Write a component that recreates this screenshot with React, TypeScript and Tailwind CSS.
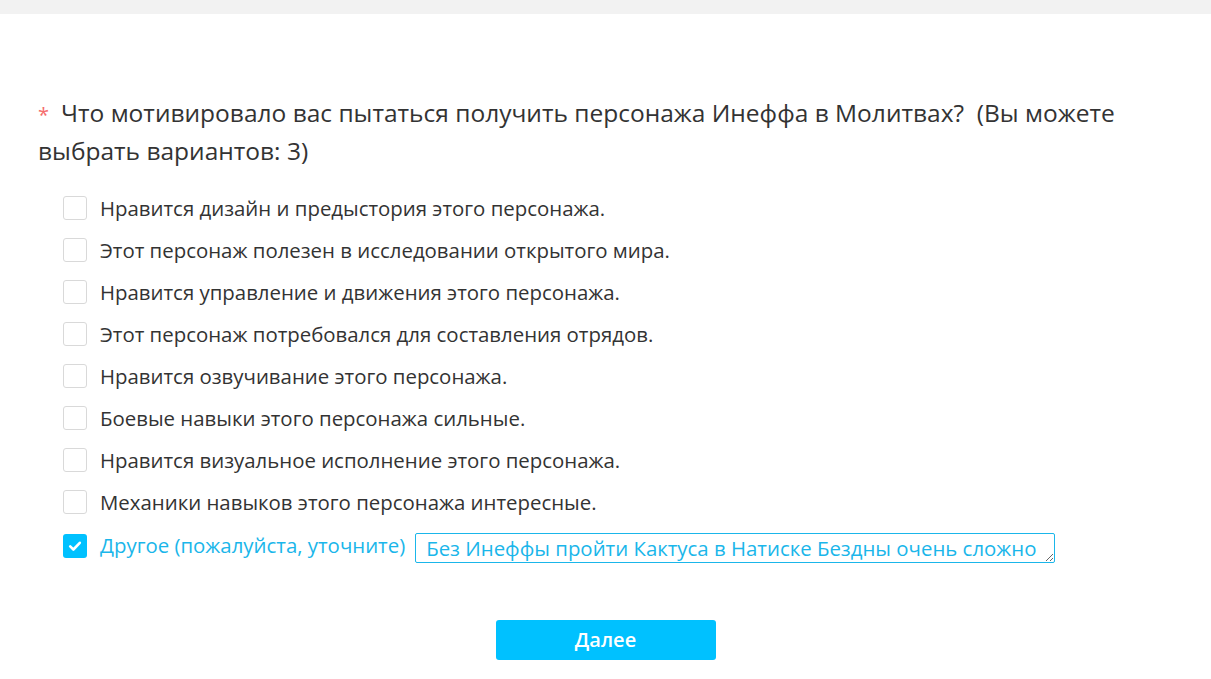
import React from "react";

const options = [
  "Нравится дизайн и предыстория этого персонажа.",
  "Этот персонаж полезен в исследовании открытого мира.",
  "Нравится управление и движения этого персонажа.",
  "Этот персонаж потребовался для составления отрядов.",
  "Нравится озвучивание этого персонажа.",
  "Боевые навыки этого персонажа сильные.",
  "Нравится визуальное исполнение этого персонажа.",
  "Механики навыков этого персонажа интересные.",
];

const font = { fontFamily: '"Open Sans", "Noto Sans", sans-serif' };

export default function App() {
  return (
    <div className="min-h-screen bg-white text-[#333]" style={font}>
      <div className="h-[14px] bg-[#f2f2f2]" />
      <div className="px-[38px] pt-[80px]">
        {/* Question */}
        <h2 className="text-[24.5px] leading-[38px] text-[#333] pr-[50px]">
          <span className="inline-block text-[#f56c6c] mr-[12px] text-[20px] leading-none">*</span>
          Что мотивировало вас пытаться получить персонажа Инеффа в Молитвах?&nbsp; (Вы можете выбрать вариантов: 3)
        </h2>

        {/* Options */}
        <div className="mt-[17px] pl-[25px] flex flex-col">
          {options.map((text) => (
            <label key={text} className="flex items-center h-[42px] gap-[13px] cursor-pointer">
              <span className="w-[24px] h-[24px] rounded-[3px] border border-[#d9d9d9] bg-white" />
              <span className="text-[20.4px] text-[#333]">{text}</span>
            </label>
          ))}
          <div className="flex items-center h-[43px] mt-[1px] gap-[13px]">
            <span className="w-[24px] h-[24px] rounded-[3px] bg-[#00c1ff] flex items-center justify-center">
              <svg width="16" height="16" viewBox="0 0 16 16" fill="none">
                <path d="M3.2 8.4l3.2 3.1L12.8 4.8" stroke="white" strokeWidth="2.6" strokeLinecap="round" strokeLinejoin="round" />
              </svg>
            </span>
            <span className="text-[20.4px] text-[#1ab6ea]">Другое (пожалуйста, уточните)</span>
            <textarea
              readOnly
              rows={1}
              defaultValue="Без Инеффы пройти Кактуса в Натиске Бездны очень сложно"
              className="-ml-[3px] mt-[4px] w-[640px] h-[30px] border border-[#1ab6ea] rounded-[2px] px-[10px] text-[20.4px] leading-[28px] text-[#1ab6ea] overflow-hidden outline-none"
              style={font}
            />
          </div>
        </div>

        {/* Next */}
        <div className="flex justify-center mt-[53px]">
          <button className="w-[220px] h-[40px] bg-[#00c1ff] rounded-[3px] text-white text-[20px] font-semibold">
            Далее
          </button>
        </div>
      </div>
    </div>
  );
}
